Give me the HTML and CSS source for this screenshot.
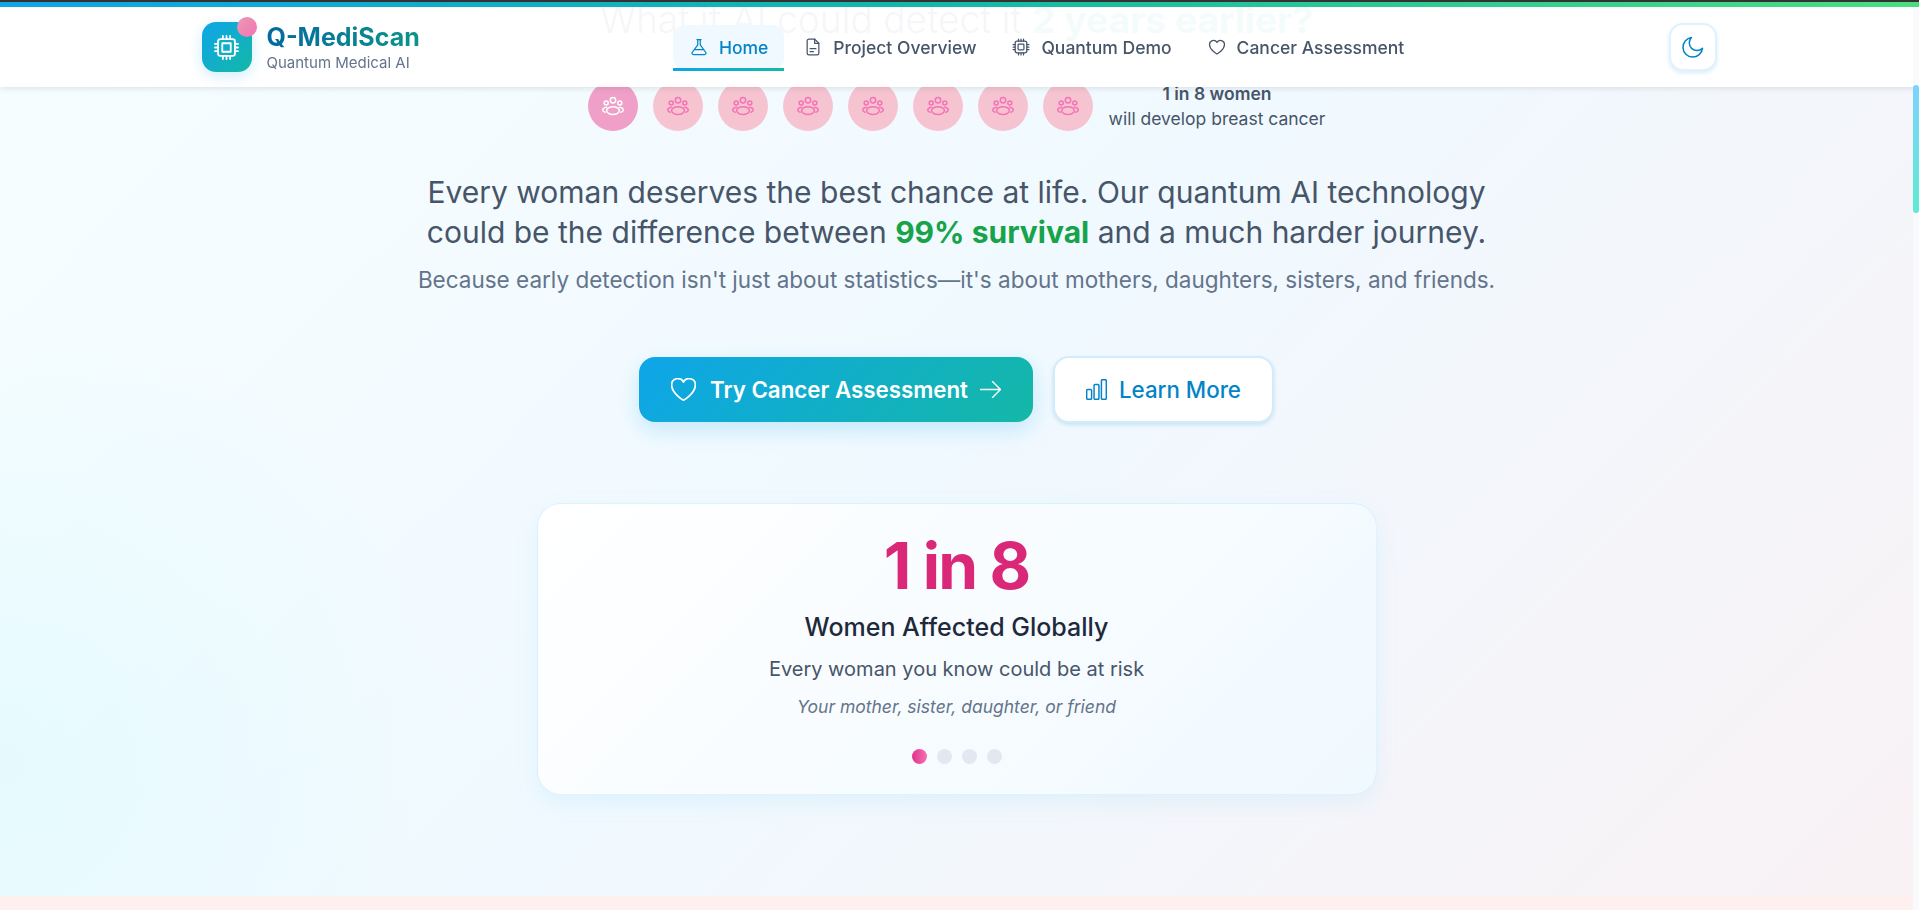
FILE: index.html
```html
<!DOCTYPE html>
<html lang="en">
<head>
  <meta charset="UTF-8" />
  <meta name="viewport" content="width=device-width, initial-scale=1.0" />
  <title>Q-MediScan | Quantum Medical AI</title>
  <link rel="stylesheet" href="styles.css">
</head>
<body>
  <!-- shared icon -->
  <svg class="icon-defs" aria-hidden="true">
    <symbol id="women" viewBox="0 0 24 24">
      <circle cx="12" cy="6.2" r="2.7" />
      <circle cx="5.2" cy="9" r="2" />
      <circle cx="18.8" cy="9" r="2" />
      <ellipse cx="12" cy="16.6" rx="6.4" ry="3.9" />
      <path d="M5.6 13.2c-2.4.3-3.9 1.4-3.9 2.7 0 1 .9 1.8 2.5 2.3" />
      <path d="M18.4 13.2c2.4.3 3.9 1.4 3.9 2.7 0 1-.9 1.8-2.5 2.3" />
    </symbol>
  </svg>

  <div class="progress"></div>

  <nav class="topnav">
    <div class="topnav-inner">
      <div class="brand">
        <div class="brand-logo">
          <svg class="line-icon" viewBox="0 0 24 24">
            <rect x="5" y="5" width="14" height="14" rx="2" />
            <rect x="8.5" y="8.5" width="7" height="7" />
            <path d="M9 2.500V5M12 2.500V5M15 2.500V5M9 19v2.500M12 19v2.500M15 19v2.500M2.500 9H5M2.500 12H5M2.500 15H5M19 9h2.500M19 12h2.500M19 15h2.500" />
          </svg>
          <span class="brand-dot"></span>
        </div>
        <div>
          <div class="brand-name"><span>Q-MediScan</span></div>
          <div class="brand-sub">Quantum Medical AI</div>
        </div>
      </div>

      <div class="nav-links">
        <a class="nav-link active">
          <svg class="line-icon" viewBox="0 0 24 24">
            <path d="M9.500 3h5M10.500 3v6.500L3.800 18.600A1.600 1.600 0 0 0 5.100 21h13.800a1.600 1.600 0 0 0 1.300-2.400L13.500 9.500V3" />
            <path d="M6.500 15h11" />
          </svg>
          Home
        </a>
        <a class="nav-link">
          <svg class="line-icon" viewBox="0 0 24 24">
            <path d="M14 2.500H7a2 2 0 0 0-2 2v15a2 2 0 0 0 2 2h10a2 2 0 0 0 2-2V7.500z" />
            <path d="M14 2.500v5h5M8.500 14h7M8.500 17.500h4" />
          </svg>
          Project Overview
        </a>
        <a class="nav-link">
          <svg class="line-icon" viewBox="0 0 24 24">
            <rect x="5" y="5" width="14" height="14" rx="2.500" />
            <rect x="8.500" y="8.500" width="7" height="7" rx="1" />
            <path d="M9 2.500V5M12 2.500V5M15 2.500V5M9 19v2.500M12 19v2.500M15 19v2.500M2.500 9H5M2.500 12H5M2.500 15H5M19 9h2.500M19 12h2.500M19 15h2.500" />
          </svg>
          Quantum Demo
        </a>
        <a class="nav-link">
          <svg class="line-icon" viewBox="0 0 24 24">
            <path d="M12 20.500S3 15.300 3 9a4.800 4.800 0 0 1 9-2.400A4.800 4.800 0 0 1 21 9c0 6.300-9 11.500-9 11.500z" />
          </svg>
          Cancer Assessment
        </a>
      </div>

      <button class="theme-btn">
        <svg class="line-icon" viewBox="0 0 24 24">
          <path d="M10.500 2.500a7.500 7.500 0 0 0 11 10.800 9.800 9.800 0 1 1-11-10.800z" />
        </svg>
      </button>
    </div>
  </nav>

  <main class="hero">
    <h1 class="hero-title">What if AI could detect it <strong>2 years earlier?</strong></h1>

    <div class="stat-row">
      <div class="woman highlighted"><svg><use href="#women" /></svg></div>
      <div class="woman"><svg><use href="#women" /></svg></div>
      <div class="woman"><svg><use href="#women" /></svg></div>
      <div class="woman"><svg><use href="#women" /></svg></div>
      <div class="woman"><svg><use href="#women" /></svg></div>
      <div class="woman"><svg><use href="#women" /></svg></div>
      <div class="woman"><svg><use href="#women" /></svg></div>
      <div class="woman"><svg><use href="#women" /></svg></div>
      <div class="stat-note">
        <b>1 in 8 women</b>
        <span>will develop breast cancer</span>
      </div>
    </div>

    <p class="hero-lead">Every woman deserves the best chance at life. Our quantum AI technology<br>could be the difference between <strong>99% survival</strong> and a much harder journey.</p>
    <p class="hero-sub">Because early detection isn't just about statistics—it's about mothers, daughters, sisters, and friends.</p>

    <div class="hero-actions">
      <button class="btn btn-primary">
        <svg class="line-icon heart" viewBox="2 3.200 20 18.400">
          <path d="M12 21S2.500 15.500 2.500 8.800A5 5 0 0 1 12 6.500a5 5 0 0 1 9.500 2.300C21.500 15.500 12 21 12 21z" />
        </svg>
        Try Cancer Assessment
        <svg class="line-icon arrow" viewBox="1.500 3.500 21 17">
          <path d="M2 12h20M14 4l8 8-8 8" />
        </svg>
      </button>
      <button class="btn btn-secondary">
        <svg class="line-icon" viewBox="1.300 1.300 21.400 21.400">
          <rect x="2" y="12" width="5" height="10" rx="1" />
          <rect x="9.500" y="7" width="5" height="15" rx="1" />
          <rect x="17" y="2" width="5" height="20" rx="1" />
        </svg>
        Learn More
      </button>
    </div>

    <section class="fact-card">
      <div class="fact-number">1 in 8</div>
      <h3>Women Affected Globally</h3>
      <p class="fact-text">Every woman you know could be at risk</p>
      <p class="fact-note">Your mother, sister, daughter, or friend</p>
      <div class="dots">
        <span class="dot active"></span>
        <span class="dot"></span>
        <span class="dot"></span>
        <span class="dot"></span>
      </div>
    </section>
  </main>

  <div class="next-section"></div>

  <div class="scroll-track"><div class="scroll-thumb"></div></div>
</body>
</html>
```

FILE: styles.css
```css
* {
  box-sizing: border-box;
}
html, body {
  height: 100%;
}
body {
  margin: 0;
  padding-right: 6px;
  font-family: Inter, 'Noto Sans', sans-serif;
  color: #475569;
  background: #fff0f0;
  overflow: hidden;
}
.icon-defs {
  display: none;
}
.line-icon {
  width: 20px;
  height: 20px;
  flex: none;
  fill: none;
  stroke: currentColor;
  stroke-width: 1.5;
  stroke-linecap: round;
  stroke-linejoin: round;
}

/* top bars */
.progress {
  position: fixed;
  top: 0;
  left: 0;
  right: 0;
  height: 7px;
  border-top: 2px solid #333;
  background: linear-gradient(90deg, #0ea5e9, #14b8a6 50%, #4ade80);
  z-index: 20;
}
.topnav {
  position: fixed;
  top: 7px;
  left: 0;
  right: 0;
  height: 80px;
  background: rgba(255,255,255,0.95);
  box-shadow: 0 1px 6px rgba(15,23,42,0.12);
  z-index: 10;
}
.topnav-inner {
  max-width: 1516px;
  height: 100%;
  margin: 0 auto;
  display: flex;
  align-items: center;
  justify-content: space-between;
}
.brand {
  display: flex;
  align-items: center;
  gap: 15px;
}
.brand-logo {
  position: relative;
  width: 50px;
  height: 50px;
  border-radius: 14px;
  background: linear-gradient(135deg, #0ea5e9, #14b8a6);
  box-shadow: 0 4px 14px rgba(14,165,233,0.2);
  color: #fff;
  display: flex;
  align-items: center;
  justify-content: center;
}
.brand-logo .line-icon {
  width: 29px;
  height: 29px;
}
.brand-dot {
  position: absolute;
  top: -5px;
  right: -5px;
  width: 20px;
  height: 20px;
  border-radius: 50%;
  background: linear-gradient(135deg, #e99bb0, #f472b6);
}
.brand-name {
  font-size: 25px;
  font-weight: 700;
  line-height: 32px;
}
.brand-name span {
  background: linear-gradient(90deg, #0369a1, #0d9488);
  -webkit-background-clip: text;
  background-clip: text;
  color: transparent;
}
.brand-sub {
  font-size: 15px;
  line-height: 20px;
  color: #64748b;
}
.nav-links {
  display: flex;
  gap: 3px;
  margin-left: 4px;
}
.nav-link {
  position: relative;
  display: flex;
  align-items: center;
  gap: 10px;
  height: 45px;
  padding: 0 16px;
  border-radius: 12px;
  font-size: 17.5px;
  font-weight: 500;
  color: #475569;
}
.nav-link.active {
  background: #f0f9ff;
  color: #0284c7;
}
.nav-link.active::after {
  content: '';
  position: absolute;
  left: 0;
  right: 0;
  bottom: -1px;
  height: 3px;
  background: linear-gradient(90deg, #0ea5e9, #14b8a6);
}
.theme-btn {
  width: 48px;
  height: 48px;
  padding: 0;
  border: 2px solid #e0f2fe;
  border-radius: 14px;
  background: #fff;
  box-shadow: 0 2px 4px rgba(2,132,199,0.15);
  color: #0284c7;
  display: flex;
  align-items: center;
  justify-content: center;
}
.theme-btn .line-icon {
  width: 24px;
  height: 24px;
}

/* hero */
.hero {
  height: 896px;
  overflow: hidden;
  display: flex;
  flex-direction: column;
  align-items: center;
  background:
    radial-gradient(circle at 0% 85%, rgba(207,250,254,0.35), rgba(207,250,254,0) 22%),
    linear-gradient(135deg, #f6fdff 0%, #f0f9ff 50%, #f9f2f5 100%);
}
.hero-title {
  margin: 0;
  height: 44px;
  font-size: 37.2px;
  line-height: 40px;
  font-weight: 300;
  color: #475569;
}
.hero-title strong {
  font-weight: 700;
  color: #14b8a6;
}
.stat-row {
  display: flex;
  align-items: center;
  gap: 15px;
  margin-top: 37px;
}
.woman {
  width: 50px;
  height: 50px;
  border-radius: 50%;
  background: #f6c4d0;
  color: #f472b6;
  display: flex;
  align-items: center;
  justify-content: center;
}
.woman svg {
  width: 24px;
  height: 24px;
  fill: none;
  stroke: currentColor;
  stroke-width: 1.5;
  stroke-linecap: round;
}
.woman.highlighted {
  background: #f0a0c8;
  color: #fff;
}
.stat-note {
  margin-left: 1px;
  display: flex;
  flex-direction: column;
  align-items: center;
  gap: 5px;
  font-size: 17.5px;
  line-height: 20px;
  color: #475569;
}
.stat-note b {
  font-weight: 600;
}
.hero-lead {
  margin: 41px 0 0;
  font-size: 30px;
  line-height: 40px;
  text-align: center;
  color: #475569;
}
.hero-lead strong {
  font-weight: 700;
  color: #16a34a;
}
.hero-sub {
  margin: 12px 0 0;
  font-size: 22.5px;
  line-height: 32px;
  text-align: center;
  color: #64748b;
}
.hero-actions {
  display: flex;
  align-items: center;
  gap: 20px;
  margin-top: 60px;
}
.btn {
  display: flex;
  align-items: center;
  gap: 12px;
  font-family: inherit;
  font-size: 22.3px;
  border-radius: 16px;
}
.btn .line-icon {
  width: 21px;
  height: 21px;
}
.btn .heart {
  width: 25px;
  height: 23px;
  margin-right: 2px;
  stroke-width: 1.4;
}
.btn .arrow {
  height: 17px;
  stroke-width: 1.4;
}
.btn-primary {
  height: 65px;
  padding: 0 32px;
  border: none;
  font-weight: 600;
  color: #fff;
  background: linear-gradient(135deg, #0ea5e9, #14b8a6);
  box-shadow: 0 8px 22px rgba(14,165,233,0.2);
}
.btn-secondary {
  height: 67px;
  padding: 0 31px;
  border: 2px solid #d3ecfb;
  font-weight: 500;
  color: #0284c7;
  background: #fff;
  box-shadow: 0 2px 4px rgba(2,132,199,0.18);
}
.fact-card {
  width: 840px;
  height: 292px;
  margin-top: 80px;
  padding-top: 24px;
  border: 1px solid rgba(186,230,253,0.45);
  border-radius: 24px;
  background: linear-gradient(135deg, #fff, #f0f9ff);
  box-shadow: 0 8px 24px rgba(14,165,233,0.08);
  text-align: center;
}
.fact-number {
  font-size: 64px;
  line-height: 76px;
  font-weight: 700;
  letter-spacing: -1.9px;
  color: #db2777;
}
.fact-card h3 {
  margin: 7px 0 0;
  font-size: 25px;
  line-height: 32px;
  font-weight: 500;
  color: #1e293b;
}
.fact-text {
  margin: 12px 0 0;
  font-size: 20px;
  line-height: 28px;
  color: #475569;
}
.fact-note {
  margin: 12px 0 0;
  font-size: 17.5px;
  line-height: 24px;
  font-style: italic;
  color: #64748b;
}
.dots {
  display: flex;
  justify-content: center;
  gap: 10px;
  margin-top: 30px;
}
.dot {
  width: 15px;
  height: 15px;
  border-radius: 50%;
  background: #e2e8f0;
}
.dot.active {
  background: linear-gradient(90deg, #e0338a, #f472b6);
}
.next-section {
  height: 14px;
  background: #fff0f0;
}

/* page scrollbar */
.scroll-track {
  position: fixed;
  top: 7px;
  right: 0;
  bottom: 0;
  width: 6px;
  background: #f8fafc;
  z-index: 15;
}
.scroll-thumb {
  margin-top: 78px;
  height: 128px;
  border-radius: 3px;
  background: linear-gradient(180deg, #7dd3fc, #5eead4);
}
```
